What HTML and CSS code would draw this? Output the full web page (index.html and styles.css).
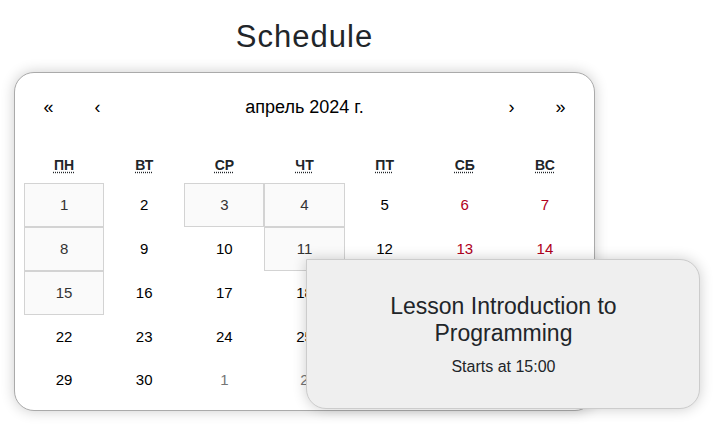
FILE: index.html
```html
<!DOCTYPE html>
<html lang="en">
<head>
<meta charset="utf-8">
<meta name="viewport" content="width=device-width, initial-scale=1">
<title>Schedule</title>
<link rel="stylesheet" href="styles.css">
</head>
<body>
<main class="schedule">
  <h1 class="schedule-title">Schedule</h1>
  <section class="calendar" lang="ru">
    <nav class="calendar-nav">
      <button type="button" class="nav-arrow">«</button>
      <button type="button" class="nav-arrow">‹</button>
      <button type="button" class="nav-label">апрель 2024 г.</button>
      <button type="button" class="nav-arrow">›</button>
      <button type="button" class="nav-arrow">»</button>
    </nav>
    <table class="month">
      <thead>
        <tr>
          <th scope="col"><abbr title="понедельник">ПН</abbr></th>
          <th scope="col"><abbr title="вторник">ВТ</abbr></th>
          <th scope="col"><abbr title="среда">СР</abbr></th>
          <th scope="col"><abbr title="четверг">ЧТ</abbr></th>
          <th scope="col"><abbr title="пятница">ПТ</abbr></th>
          <th scope="col"><abbr title="суббота">СБ</abbr></th>
          <th scope="col"><abbr title="воскресенье">ВС</abbr></th>
        </tr>
      </thead>
      <tbody>
        <tr>
          <td><button type="button" class="day booked">1</button></td>
          <td><button type="button" class="day">2</button></td>
          <td><button type="button" class="day booked">3</button></td>
          <td><button type="button" class="day booked">4</button></td>
          <td><button type="button" class="day">5</button></td>
          <td><button type="button" class="day weekend">6</button></td>
          <td><button type="button" class="day weekend">7</button></td>
        </tr>
        <tr>
          <td><button type="button" class="day booked">8</button></td>
          <td><button type="button" class="day">9</button></td>
          <td><button type="button" class="day">10</button></td>
          <td class="has-lesson">
            <button type="button" class="day booked" aria-describedby="lesson">11</button>
            <div class="lesson" id="lesson" role="tooltip" lang="en">
              <h2 class="lesson-title">Lesson Introduction to Programming</h2>
              <p class="lesson-time">Starts at 15:00</p>
            </div>
          </td>
          <td><button type="button" class="day">12</button></td>
          <td><button type="button" class="day weekend">13</button></td>
          <td><button type="button" class="day weekend">14</button></td>
        </tr>
        <tr>
          <td><button type="button" class="day booked">15</button></td>
          <td><button type="button" class="day">16</button></td>
          <td><button type="button" class="day">17</button></td>
          <td><button type="button" class="day">18</button></td>
          <td><button type="button" class="day">19</button></td>
          <td><button type="button" class="day weekend">20</button></td>
          <td><button type="button" class="day weekend">21</button></td>
        </tr>
        <tr>
          <td><button type="button" class="day">22</button></td>
          <td><button type="button" class="day">23</button></td>
          <td><button type="button" class="day">24</button></td>
          <td><button type="button" class="day">25</button></td>
          <td><button type="button" class="day">26</button></td>
          <td><button type="button" class="day weekend">27</button></td>
          <td><button type="button" class="day weekend">28</button></td>
        </tr>
        <tr>
          <td><button type="button" class="day">29</button></td>
          <td><button type="button" class="day">30</button></td>
          <td><button type="button" class="day outside">1</button></td>
          <td><button type="button" class="day outside">2</button></td>
          <td><button type="button" class="day outside">3</button></td>
          <td><button type="button" class="day outside">4</button></td>
          <td><button type="button" class="day outside">5</button></td>
        </tr>
      </tbody>
    </table>
  </section>
</main>
</body>
</html>
```
FILE: styles.css
```css
* {
  box-sizing: border-box;
}

body {
  margin: 0;
  background: #fff;
  color: #212529;
  font-family: "Liberation Sans", Arial, sans-serif;
  font-size: 16px;
  line-height: 24px;
}

button {
  padding: 0;
  border: 0;
  background: none;
  color: #000;
  font: inherit;
  cursor: pointer;
}

.schedule {
  max-width: 609px;
  padding: 19px 14px 32px;
}

.schedule-title {
  margin: 0 0 17px;
  font-size: 31px;
  font-weight: 400;
  line-height: 36px;
  letter-spacing: 1px;
  text-align: center;
}

.calendar {
  padding: 10px 9px 9px;
  border: 1px solid #aaa;
  border-radius: 20px;
  background: #fff;
  box-shadow: 0 0 14px rgba(0, 0, 0, 0.2);
}

.calendar-nav {
  display: flex;
  height: 48px;
  margin-bottom: 16px;
}

.nav-arrow {
  width: 49px;
  font-size: 18px;
}

.nav-label {
  flex: 1;
  font-size: 18px;
}

.month {
  width: 100%;
  table-layout: fixed;
  border-spacing: 0;
}

.month th {
  height: 36px;
  padding: 0;
  font-size: 14px;
  line-height: 20px;
}

.month abbr {
  text-decoration: underline dotted;
  text-underline-offset: 2px;
}

.month td {
  height: 43px;
  padding: 0;
}

.day {
  display: block;
  width: 100%;
  height: 43px;
  font-size: 15px;
}

.booked {
  height: 44px;
  border: 1px solid #d3d3d3;
  background: #fafafa;
  color: #333;
}

.weekend {
  color: #b00020;
}

.outside {
  color: #757575;
}

.has-lesson {
  position: relative;
}

.lesson {
  position: absolute;
  z-index: 1;
  top: 32px;
  left: 42px;
  width: 394px;
  padding: 33px 32px 29px;
  border: 1px solid #ccc;
  border-radius: 0 20px 20px 20px;
  background: #efefef;
  box-shadow: 0 0 14px rgba(0, 0, 0, 0.2);
  text-align: center;
}

.lesson-title {
  margin: 0 0 8px;
  font-size: 23px;
  font-weight: 400;
  line-height: 27px;
}

.lesson-time {
  margin: 0;
}
```
